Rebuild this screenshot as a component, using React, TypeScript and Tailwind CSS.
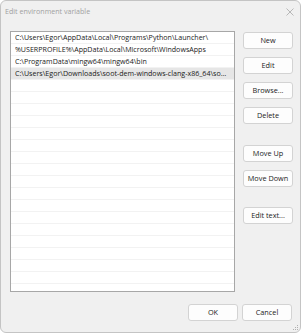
const paths: string[] = [
  'C:\\Users\\Egor\\AppData\\Local\\Programs\\Python\\Launcher\\',
  '%USERPROFILE%\\AppData\\Local\\Microsoft\\WindowsApps',
  'C:\\ProgramData\\mingw64\\mingw64\\bin',
  'C:\\Users\\Egor\\Downloads\\soot-dem-windows-clang-x86_64\\soot-dem-windows-clang-x86_64\\bin',
];

const font = { fontFamily: '"Open Sans", "Noto Sans", sans-serif' };

function Btn({ label, className = '' }: { label: string; className?: string }) {
  return (
    <button
      className={`w-[50px] h-[17px] rounded-[3px] border border-[#d3d3d3] bg-[#fdfdfd] text-[7.3px] text-[#1b1b1b] leading-[15px] ${className}`}>
      {label}
    </button>
  );
}

export default function App() {
  const rows = Array.from({ length: 22 }, (_, i) => paths[i] ?? '');

  return (
    <div
      className="w-[301px] h-[333px] bg-[#f0f0f0] border border-[#c4c4c4] rounded-[6px] flex flex-col overflow-hidden relative"
      style={font}>
      {/* title bar */}
      <div className="h-[20px] flex items-center justify-between pl-[4px] pr-[6px] shrink-0">
        <span className="text-[7.1px] text-[#a0a0a0]">Edit environment variable</span>
        <svg width="8" height="8" viewBox="0 0 8 8" className="mt-[1px]">
          <path d="M0.5 0.5 L7.5 7.5 M7.5 0.5 L0.5 7.5" stroke="#a8a8a8" strokeWidth="0.8" />
        </svg>
      </div>

      {/* body */}
      <div className="flex pl-[9px] pt-[10px] gap-[8px]">
        <div className="w-[225px] h-[261px] bg-white border border-[#a7a7a7] overflow-hidden">
          {rows.map((p, i) => (
            <div
              key={i}
              className={`h-[12px] pl-[4px] pr-[4px] border-b border-[#f2f2f2] ${
                i === 3 ? 'bg-[#e6e6e6]' : ''
              }`}>
              <div className="text-[7.1px] text-[#1a1a1a] whitespace-nowrap overflow-hidden text-ellipsis leading-[11px]">
                {p}
              </div>
            </div>
          ))}
        </div>

        <div className="flex flex-col pt-[1px]">
          <div className="flex flex-col gap-[8px]">
            <Btn label="New" />
            <Btn label="Edit" />
            <Btn label="Browse..." />
            <Btn label="Delete" />
          </div>
          <div className="flex flex-col gap-[8px] mt-[21px]">
            <Btn label="Move Up" />
            <Btn label="Move Down" />
          </div>
          <Btn label="Edit text..." className="mt-[20px]" />
        </div>
      </div>

      {/* footer */}
      <div className="flex justify-end gap-[4px] pr-[8px] mt-[12px]">
        <Btn label="OK" />
        <Btn label="Cancel" />
      </div>

      {/* resize grip */}
      <svg width="6" height="6" viewBox="0 0 6 6" className="absolute right-[1px] bottom-[1px]">
        <rect x="4" y="0" width="1" height="1" fill="#b0b0b0" />
        <rect x="2" y="2" width="1" height="1" fill="#b0b0b0" />
        <rect x="4" y="2" width="1" height="1" fill="#b0b0b0" />
        <rect x="0" y="4" width="1" height="1" fill="#b0b0b0" />
        <rect x="2" y="4" width="1" height="1" fill="#b0b0b0" />
        <rect x="4" y="4" width="1" height="1" fill="#b0b0b0" />
      </svg>
    </div>
  );
}
